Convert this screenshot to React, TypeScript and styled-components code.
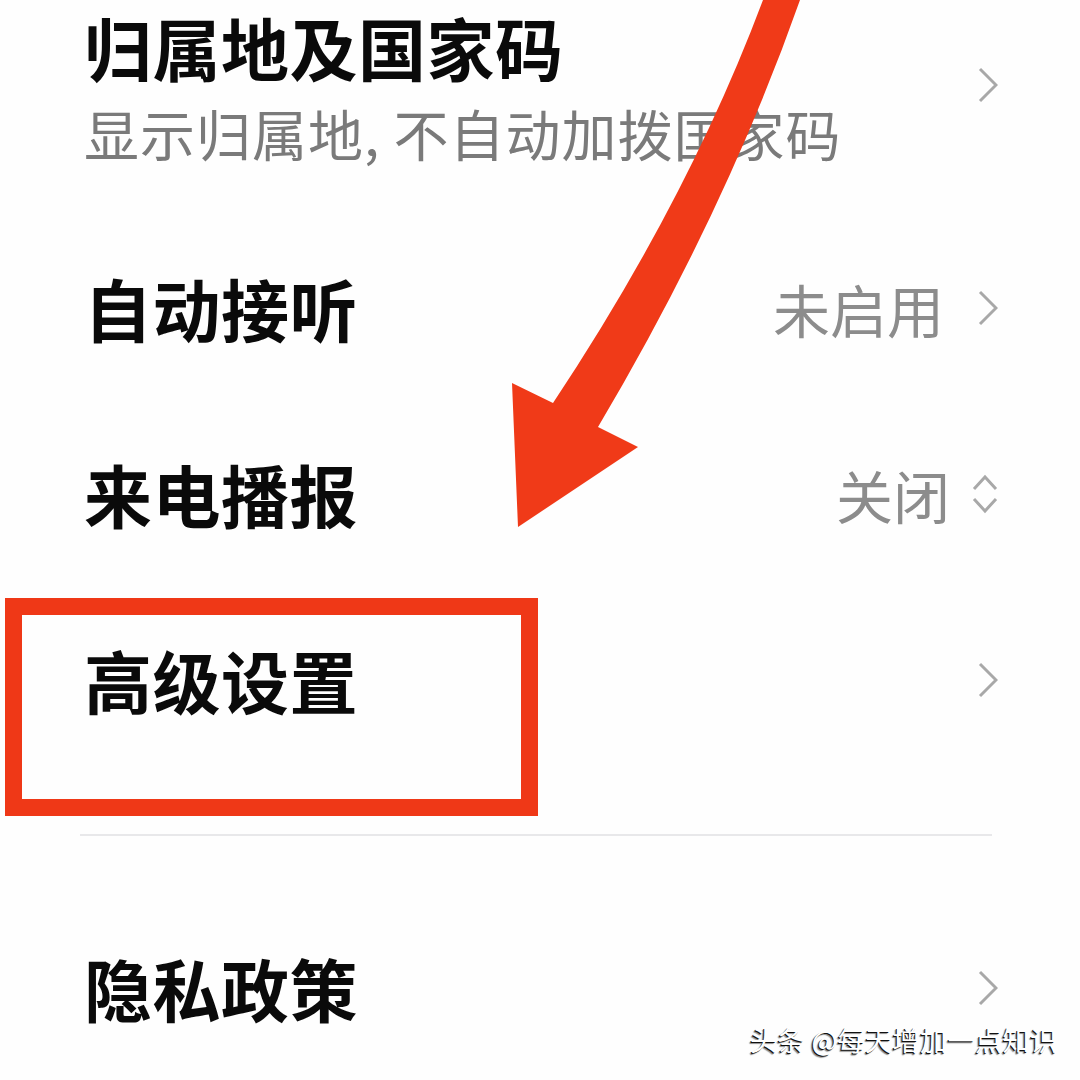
import React from 'react';
import styled, { createGlobalStyle } from 'styled-components';

const GlobalStyle = createGlobalStyle`
  html, body {
    margin: 0;
    padding: 0;
    background: #ffffff;
  }
  body {
    font-family: "Noto Sans CJK SC", "Noto Sans", sans-serif;
    overflow: hidden;
  }
`;

const Page = styled.div`
  position: relative;
  width: 1080px;
  height: 1080px;
  background: #fefefe;
  overflow: hidden;
`;

const List = styled.div`
  display: flex;
  flex-direction: column;
  padding: 0 82px 0 84px;
`;

const HeaderRow = styled.div`
  display: flex;
  align-items: flex-start;
  justify-content: space-between;
  height: 215px;
  padding-top: 7px;
  box-sizing: border-box;
`;

const HeaderText = styled.div`
  display: flex;
  flex-direction: column;
  gap: 12px;
`;

const Row = styled.div`
  display: flex;
  align-items: center;
  justify-content: space-between;
  height: 186px;
`;

const Title = styled.div`
  font-size: 68px;
  line-height: 80px;
  font-weight: 700;
  color: #0a0a0a;
  letter-spacing: 0.5px;
`;

const Subtitle = styled.div`
  font-size: 55px;
  line-height: 66px;
  color: #7a7a7a;
  letter-spacing: 1px;
  white-space: nowrap;
`;

const Trailing = styled.div<{ $top?: number; $gap?: number }>`
  display: flex;
  align-items: center;
  gap: ${(p) => p.$gap ?? 28}px;
  margin-top: ${(p) => p.$top ?? 0}px;
`;

const Value = styled.span`
  font-size: 57px;
  line-height: 66px;
  color: #8c8c8c;
`;

const IconSlot = styled.div`
  width: 26px;
  display: flex;
  justify-content: flex-end;
  align-items: center;
`;

const Divider = styled.div`
  height: 2px;
  background: #e8e8ea;
  margin: 61px 6px 59px -4px;
`;

const Highlight = styled.div`
  position: absolute;
  left: 5px;
  top: 598px;
  width: 533px;
  height: 218px;
  box-sizing: border-box;
  border: 17px solid #ef3817;
  pointer-events: none;
`;

const ArrowLayer = styled.svg`
  position: absolute;
  left: 0;
  top: 0;
  pointer-events: none;
`;

const Watermark = styled.div`
  position: absolute;
  left: 750px;
  top: 1021px;
  font-size: 27px;
  line-height: 38px;
  letter-spacing: 0.5px;
  color: #ffffff;
  text-shadow: -1px 1px 0 #111, -2px 2px 1px rgba(0, 0, 0, 0.45);
  white-space: nowrap;
`;

const Chevron = () => (
  <svg width="20" height="36" viewBox="0 0 20 36">
    <polyline points="2,2 18,18 2,34" fill="none" stroke="#a8a8a8" strokeWidth="3" />
  </svg>
);

const UpDown = () => (
  <svg width="26" height="40" viewBox="0 0 26 40">
    <polyline points="2,15 13,3 24,15" fill="none" stroke="#a8a8a8" strokeWidth="3" />
    <polyline points="2,25 13,37 24,25" fill="none" stroke="#a8a8a8" strokeWidth="3" />
  </svg>
);

type Item = { title: string; value?: string; icon: 'chevron' | 'updown' };

const items: Item[] = [
  { title: '自动接听', value: '未启用', icon: 'chevron' },
  { title: '来电播报', value: '关闭', icon: 'updown' },
  { title: '高级设置', icon: 'chevron' },
];

const SettingRow = ({ title, value, icon }: Item) => (
  <Row>
    <Title>{title}</Title>
    <Trailing $gap={icon === 'updown' ? 22 : 28}>
      {value && <Value>{value}</Value>}
      <IconSlot>{icon === 'chevron' ? <Chevron /> : <UpDown />}</IconSlot>
    </Trailing>
  </Row>
);

export default function App() {
  return (
    <Page>
      <GlobalStyle />
      <List>
        <HeaderRow>
          <HeaderText>
            <Title>归属地及国家码</Title>
            <Subtitle>显示归属地, 不自动加拨国家码</Subtitle>
          </HeaderText>
          <Trailing $top={60}>
            <IconSlot>
              <Chevron />
            </IconSlot>
          </Trailing>
        </HeaderRow>
        {items.map((it) => (
          <SettingRow key={it.title} {...it} />
        ))}
        <Divider />
        <SettingRow title="隐私政策" icon="chevron" />
      </List>

      <Highlight />
      <ArrowLayer width="1080" height="1080" viewBox="0 0 1080 1080">
        <path
          d="M763,0 Q688,200 553,403 L512,383 L518,527 L638,447 L598,427 Q725,213 800,0 Z"
          fill="#f03a18"
        />
      </ArrowLayer>
      <Watermark>头条 @每天增加一点知识</Watermark>
    </Page>
  );
}
